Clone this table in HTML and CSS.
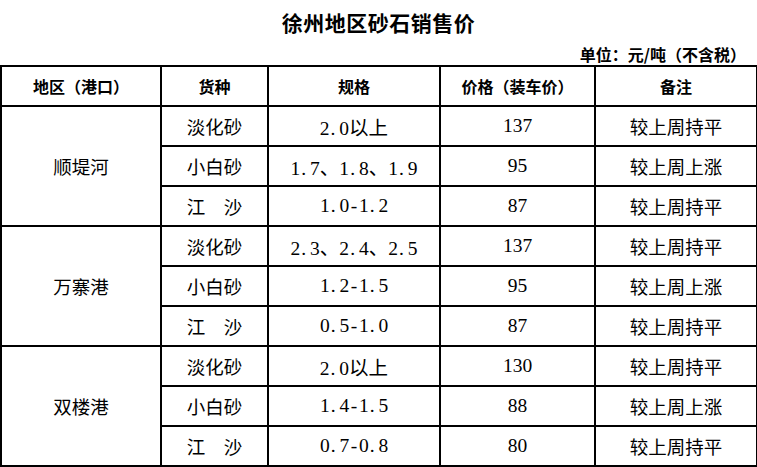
FILE: index.html
```html
<!DOCTYPE html>
<html lang="zh-CN">
<head>
<meta charset="utf-8">
<title>徐州地区砂石销售价</title>
<link rel="stylesheet" href="styles.css">
</head>
<body>
<div class="page">
  <h1 class="title">徐州地区砂石销售价</h1>
  <div class="unit">单位：元/吨（不含税）</div>
  <table class="price">
    <colgroup>
      <col class="c1"><col class="c2"><col class="c3"><col class="c4"><col class="c5">
    </colgroup>
    <thead>
      <tr><th>地区（港口）</th><th>货种</th><th>规格</th><th>价格（装车价）</th><th>备注</th></tr>
    </thead>
    <tbody>
      <tr><td rowspan="3">顺堤河</td><td>淡化砂</td><td class="num">2<span class="pt">.</span>0以上</td><td class="num">137</td><td>较上周持平</td></tr>
      <tr><td>小白砂</td><td class="num">1<span class="pt">.</span>7、1<span class="pt">.</span>8、1<span class="pt">.</span>9</td><td class="num">95</td><td>较上周上涨</td></tr>
      <tr><td>江　沙</td><td class="num">1<span class="pt">.</span>0<span class="hy">-</span>1<span class="pt">.</span>2</td><td class="num">87</td><td>较上周持平</td></tr>
      <tr><td rowspan="3">万寨港</td><td>淡化砂</td><td class="num">2<span class="pt">.</span>3、2<span class="pt">.</span>4、2<span class="pt">.</span>5</td><td class="num">137</td><td>较上周持平</td></tr>
      <tr><td>小白砂</td><td class="num">1<span class="pt">.</span>2<span class="hy">-</span>1<span class="pt">.</span>5</td><td class="num">95</td><td>较上周上涨</td></tr>
      <tr><td>江　沙</td><td class="num">0<span class="pt">.</span>5<span class="hy">-</span>1<span class="pt">.</span>0</td><td class="num">87</td><td>较上周持平</td></tr>
      <tr><td rowspan="3">双楼港</td><td>淡化砂</td><td class="num">2<span class="pt">.</span>0以上</td><td class="num">130</td><td>较上周持平</td></tr>
      <tr><td>小白砂</td><td class="num">1<span class="pt">.</span>4<span class="hy">-</span>1<span class="pt">.</span>5</td><td class="num">88</td><td>较上周上涨</td></tr>
      <tr><td>江　沙</td><td class="num">0<span class="pt">.</span>7<span class="hy">-</span>0<span class="pt">.</span>8</td><td class="num">80</td><td>较上周持平</td></tr>
    </tbody>
  </table>
</div>
</body>
</html>
```

FILE: styles.css
```css
html, body {
  margin: 0;
  padding: 0;
  background: #ffffff;
}

body {
  font-family: "Noto Sans CJK SC", "Noto Sans", sans-serif;
  color: #000000;
}

.page {
  width: 757px;
}

.title {
  margin: 0;
  height: 44px;
  line-height: 44px;
  font-size: 21px;
  font-weight: 700;
  text-align: center;
  letter-spacing: 0.5px;
}

.unit {
  height: 20px;
  line-height: 20px;
  padding-right: 11px;
  font-size: 16px;
  font-weight: 700;
  text-align: right;
}

.price {
  border-collapse: collapse;
  table-layout: fixed;
  width: 756px;
  margin-top: 1px;
}

.c1 { width: 160px; }
.c2 { width: 107px; }
.c3 { width: 172px; }
.c4 { width: 155px; }
.c5 { width: 162px; }

.price th,
.price td {
  border: 2px solid #000000;
  height: 38px;
  padding: 0;
  text-align: center;
  vertical-align: middle;
  white-space: nowrap;
}

.price th {
  font-size: 16px;
  font-weight: 700;
}

.price td {
  font-size: 18.5px;
  font-weight: 400;
}

.price td.num {
  font-family: "Liberation Serif", "Noto Sans CJK SC", serif;
  font-size: 19.5px;
}

.pt {
  display: inline-block;
  width: 0.5em;
  text-align: left;
  padding-left: 1px;
  box-sizing: border-box;
}

.hy {
  display: inline-block;
  width: 0.5em;
  text-align: center;
}
```
